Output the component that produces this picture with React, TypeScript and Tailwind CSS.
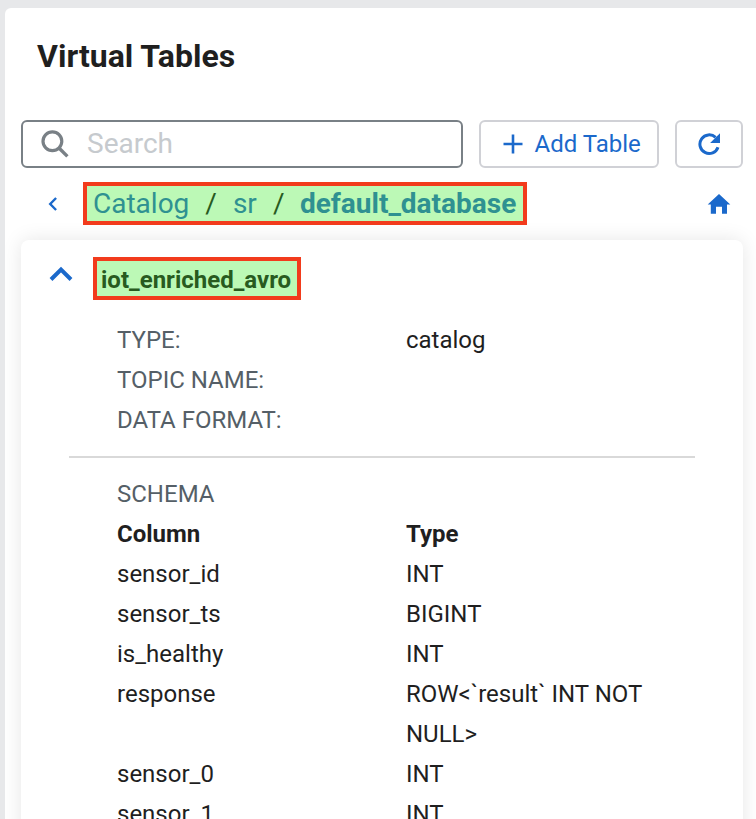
const rows: [string, string][] = [
  ["sensor_id", "INT"],
  ["sensor_ts", "BIGINT"],
  ["is_healthy", "INT"],
  ["response", "ROW<`result` INT NOT NULL>"],
  ["sensor_0", "INT"],
  ["sensor_1", "INT"],
];

function SearchIcon() {
  return (
    <svg width="30" height="30" viewBox="0 0 30 30" fill="none" stroke="#798086" strokeWidth="3.2">
      <circle cx="12.4" cy="12.3" r="9.4" />
      <path d="M19 19 27.4 27.4" strokeWidth="3.4" />
    </svg>
  );
}

function Toolbar() {
  return (
    <div className="mt-[43px] flex h-12 gap-4 pr-[13px]">
      <label className="flex w-[442px] items-center rounded-md border-2 border-[#798086] pl-[17px]">
        <SearchIcon />
        <span className="ml-[17px] text-[28px] leading-none text-[#c6cace]">Search</span>
      </label>
      <button className="flex w-[180px] items-center rounded-md border-2 border-[#d0d1d6] pl-[22px] text-2xl text-[#1b69cb]">
        <svg width="20" height="20" viewBox="0 0 20 20" stroke="currentColor" strokeWidth="2.6">
          <path d="M10 .5v19M.5 10h19" />
        </svg>
        <span className="ml-[11.5px]">Add Table</span>
      </button>
      <button className="flex w-[68px] items-center justify-center rounded-md border-2 border-[#d0d1d6] text-[#1b69cb]">
        <svg width="24" height="24" viewBox="0 0 24 24" fill="none" stroke="currentColor" strokeWidth="3">
          <path d="M21 15.2A9.3 9.3 0 1 1 18.6 5.4" />
          <path d="M23 1.2v9.9h-9.9z" fill="currentColor" stroke="none" />
        </svg>
      </button>
    </div>
  );
}

function Breadcrumb() {
  return (
    <div className="mt-3.5 flex h-[43px] items-center">
      <svg className="ml-[27px]" width="10" height="14" viewBox="0 0 10 14" fill="none" stroke="#1b69cb" strokeWidth="2.4">
        <path d="M8.1 1 2.2 7l5.9 6" />
      </svg>
      <div className="ml-[25px] flex h-[43px] w-[444px] items-center border-4 border-[#f23b1c] bg-[#bcf9b6] pl-1.5 text-[28px] leading-none whitespace-nowrap text-[#2f9191]">
        <span>Catalog</span>
        <span className="ml-4 text-[#285b1f]">/</span>
        <span className="ml-4">sr</span>
        <span className="ml-4 text-[#285b1f]">/</span>
        <span className="ml-[15.5px] font-bold">default_database</span>
      </div>
      <svg className="ml-[180px]" width="24" height="22" viewBox="0 0 24 22" fill="#1b69cb">
        <path d="M12 1 .7 11.5H3.8v9.2h5.2v-7h6v7H20v-9.2h3.3z" />
      </svg>
    </div>
  );
}

export default function App() {
  return (
    <div className="h-[819px] w-[756px] overflow-hidden bg-[#e7e8ea] pt-2 pl-[5px] font-[Roboto,sans-serif] text-[#1f1f1f]">
      <main className="h-[811px] overflow-hidden rounded-tl-md bg-white pt-7 pl-4">
        <h1 className="pl-4 text-[32px] leading-[41px] font-bold">Virtual Tables</h1>
        <Toolbar />
        <Breadcrumb />
        <section className="mt-[15px] h-[620px] w-[722px] rounded-lg bg-white pt-[17px] shadow-[0_0_20px_rgba(0,0,0,0.1)]">
          <div className="flex items-start">
            <svg className="mt-[9px] ml-7" width="24" height="16" viewBox="0 0 24 16" fill="none" stroke="#1b69cb" strokeWidth="4">
              <path d="M2 13.5 12 3.5l10 10" />
            </svg>
            <div className="ml-5 flex h-[43px] w-[208px] items-center border-4 border-[#f23b1c] bg-[#bcf9b6] pt-0.5 pl-1 text-2xl leading-none font-bold whitespace-nowrap text-[#285b1f]">
              iot_enriched_avro
            </div>
          </div>
          <div className="mt-5 grid grid-cols-[289px_280px] pl-24 text-2xl leading-10">
            <span className="text-[#555f67]">TYPE:</span>
            <span>catalog</span>
            <span className="col-span-2 text-[#555f67]">TOPIC NAME:</span>
            <span className="col-span-2 text-[#555f67]">DATA FORMAT:</span>
          </div>
          <hr className="mt-4 mr-12 ml-12 border-t-2 border-[#d9d9d9]" />
          <div className="mt-4 grid grid-cols-[289px_280px] pl-24 text-2xl leading-10">
            <span className="col-span-2 text-[#555f67]">SCHEMA</span>
            <b>Column</b>
            <b>Type</b>
            {rows.map(([name, type]) => (
              <div key={name} className="contents">
                <span>{name}</span>
                <span>{type}</span>
              </div>
            ))}
          </div>
        </section>
      </main>
    </div>
  );
}
